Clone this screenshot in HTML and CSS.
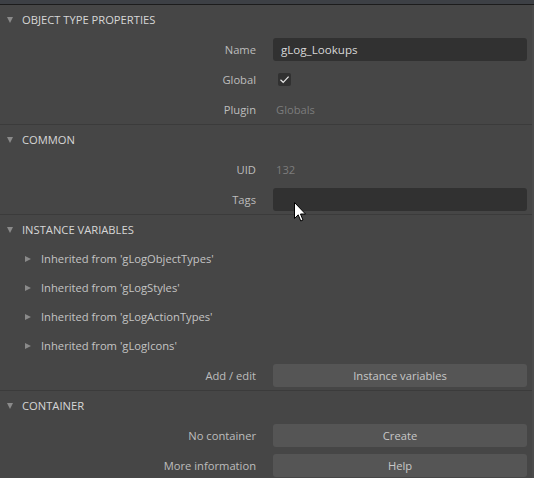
FILE: index.html
```html
<!DOCTYPE html>
<html lang="en">
  <head>
    <meta charset="UTF-8" />
    <title>Properties</title>
    <link rel="stylesheet" href="styles.css">
  </head>
  <body>
    <div class="top-strip"></div>

    <div class="panel">
      <section class="group">
        <div class="group-header"><span class="caret-down"></span>OBJECT TYPE PROPERTIES</div>
        <div class="prop">
          <div class="prop-label">Name</div>
          <div class="prop-value"><div class="text-field">gLog_Lookups</div></div>
        </div>
        <div class="prop">
          <div class="prop-label">Global</div>
          <div class="prop-value">
            <span class="checkbox">
              <svg width="13" height="13" viewBox="0 0 13 13"><path d="M2.5 6.8 L5.2 9.3 L10.6 3.6" fill="none" stroke="#e8e8e8" stroke-width="1.2"/></svg>
            </span>
          </div>
        </div>
        <div class="prop">
          <div class="prop-label">Plugin</div>
          <div class="prop-value"><span class="readonly">Globals</span></div>
        </div>
      </section>

      <section class="group">
        <div class="group-header"><span class="caret-down"></span>COMMON</div>
        <div class="prop">
          <div class="prop-label">UID</div>
          <div class="prop-value"><span class="readonly">132</span></div>
        </div>
        <div class="prop">
          <div class="prop-label">Tags</div>
          <div class="prop-value"><div class="text-field"></div></div>
        </div>
      </section>

      <section class="group">
        <div class="group-header"><span class="caret-down"></span>INSTANCE VARIABLES</div>
        <div class="subgroup"><span class="caret-right"></span>Inherited from 'gLogObjectTypes'</div>
        <div class="subgroup"><span class="caret-right"></span>Inherited from 'gLogStyles'</div>
        <div class="subgroup"><span class="caret-right"></span>Inherited from 'gLogActionTypes'</div>
        <div class="subgroup"><span class="caret-right"></span>Inherited from 'gLogIcons'</div>
        <div class="prop">
          <div class="prop-label">Add / edit</div>
          <div class="prop-value"><button class="btn">Instance variables</button></div>
        </div>
      </section>

      <section class="group last">
        <div class="group-header"><span class="caret-down"></span>CONTAINER</div>
        <div class="prop">
          <div class="prop-label">No container</div>
          <div class="prop-value"><button class="btn">Create</button></div>
        </div>
        <div class="prop">
          <div class="prop-label">More information</div>
          <div class="prop-value"><button class="btn">Help</button></div>
        </div>
      </section>
    </div>

    <svg class="cursor" width="13" height="21" viewBox="0 0 13 21">
      <path d="M0.5 0.5 L0.5 16.5 L4.2 12.8 L6.8 19 L9 18 L6.5 12 L11.5 12 Z" fill="#fff" stroke="#000" stroke-width="1"/>
    </svg>
  </body>
</html>
```

FILE: styles.css
```css
* {
  box-sizing: border-box;
}

html, body {
  margin: 0;
  padding: 0;
}

body {
  width: 534px;
  height: 478px;
  overflow: hidden;
  background: #464646;
  color: #bdbdbd;
  font-family: 'Open Sans', 'Noto Sans', sans-serif;
  font-size: 11.2px;
  position: relative;
}

.top-strip {
  height: 5px;
  background: #3d4045;
  border-bottom: 1px solid #1c1c1c;
}

.panel {
  border-right: 2px solid #4b4b4b;
}

.group {
  border-bottom: 1px solid #3b3b3b;
}

.group.last {
  border-bottom: none;
}

.group-header {
  height: 29px;
  display: flex;
  align-items: center;
  color: #d6d6d6;
  padding-left: 7px;
}

.caret-down {
  width: 0;
  height: 0;
  border-left: 3.5px solid transparent;
  border-right: 3.5px solid transparent;
  border-top: 6px solid #8a8a8a;
  margin-right: 9px;
}

.subgroup {
  height: 29px;
  display: flex;
  align-items: center;
  padding-left: 25px;
  color: #c4c4c4;
}

.caret-right {
  width: 0;
  height: 0;
  border-top: 3.5px solid transparent;
  border-bottom: 3.5px solid transparent;
  border-left: 6px solid #8a8a8a;
  margin-right: 10px;
}

.prop {
  height: 30px;
  display: grid;
  grid-template-columns: 256px 1fr;
  column-gap: 17px;
  align-items: center;
  padding-right: 5px;
}

.prop-label {
  text-align: right;
  color: #bdbdbd;
}

.prop-value {
  display: flex;
  align-items: center;
}

.text-field {
  width: 100%;
  height: 23px;
  line-height: 23px;
  background: #313131;
  border-radius: 3px;
  padding-left: 8px;
  color: #d8d8d8;
  font-size: 11.6px;
}

.checkbox {
  width: 13px;
  height: 13px;
  margin-left: 5px;
  background: #313131;
  border-radius: 2px;
  display: block;
}

.checkbox svg {
  display: block;
}

.readonly {
  padding-left: 3px;
  color: #7c7c7c;
}

.btn {
  width: 100%;
  height: 23px;
  border: none;
  border-radius: 3px;
  background: #555555;
  color: #c8c8c8;
  font: inherit;
  padding: 0;
}

.cursor {
  position: absolute;
  left: 294px;
  top: 202px;
}
```
